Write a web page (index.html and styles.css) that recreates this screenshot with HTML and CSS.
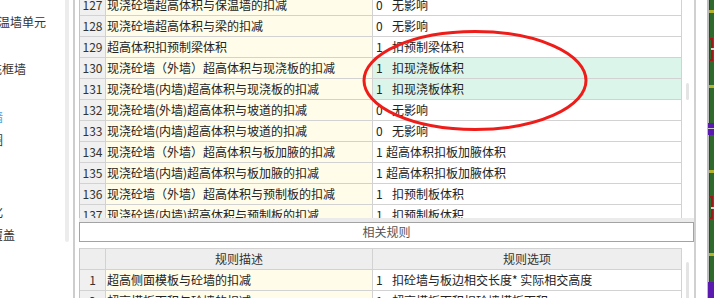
FILE: index.html
```html
<!DOCTYPE html>
<html lang="zh-CN">
<head>
    <meta charset="UTF-8">
    <title>计算规则</title>
    <link rel="stylesheet" href="styles.css">
</head>
<body>
    <div class="window">
        <div class="side">
            <div class="tree">
                <div class="node"><span class="i14">保温墙单元</span></div>
                <div class="node"></div>
                <div class="node"><span class="i22">填充框墙</span></div>
                <div class="node"></div>
                <div class="node blue"><span class="i33">砌体墙</span></div>
                <div class="node"><span class="i33">砖胎圈</span></div>
                <div class="node"></div>
                <div class="node"></div>
                <div class="node"><span class="i33">装饰化</span></div>
                <div class="node"><span class="i9">覆盖</span></div>
            </div>
            <div class="side-scroll"></div>
        </div>
        <div class="divider"></div>

        <div class="main">
            <div class="upper">
                <div class="grid">
                    <div class="row"><div class="num">127</div><div class="desc">现浇砼墙超高体积与保温墙的扣减</div><div class="val"><b>0</b>无影响</div></div>
                    <div class="row"><div class="num">128</div><div class="desc">现浇砼墙超高体积与梁的扣减</div><div class="val"><b>0</b>无影响</div></div>
                    <div class="row"><div class="num">129</div><div class="desc">超高体积扣预制梁体积</div><div class="val"><b>1</b>扣预制梁体积</div></div>
                    <div class="row hl"><div class="num">130</div><div class="desc">现浇砼墙（外墙）超高体积与现浇板的扣减</div><div class="val"><b>1</b>扣现浇板体积</div></div>
                    <div class="row hl"><div class="num">131</div><div class="desc">现浇砼墙(内墙)超高体积与现浇板的扣减</div><div class="val"><b>1</b>扣现浇板体积</div></div>
                    <div class="row"><div class="num">132</div><div class="desc">现浇砼墙(外墙)超高体积与坡道的扣减</div><div class="val"><b>0</b>无影响</div></div>
                    <div class="row"><div class="num">133</div><div class="desc">现浇砼墙(内墙)超高体积与坡道的扣减</div><div class="val"><b>0</b>无影响</div></div>
                    <div class="row"><div class="num">134</div><div class="desc">现浇砼墙（外墙）超高体积与板加腋的扣减</div><div class="val"><b class="tight">1</b>超高体积扣板加腋体积</div></div>
                    <div class="row"><div class="num">135</div><div class="desc">现浇砼墙(内墙)超高体积与板加腋的扣减</div><div class="val"><b class="tight">1</b>超高体积扣板加腋体积</div></div>
                    <div class="row"><div class="num">136</div><div class="desc">现浇砼墙（外墙）超高体积与预制板的扣减</div><div class="val"><b>1</b>扣预制板体积</div></div>
                    <div class="row"><div class="num">137</div><div class="desc">现浇砼墙(内墙)超高体积与预制板的扣减</div><div class="val"><b>1</b>扣预制板体积</div></div>
                </div>
                <div class="vscroll"><div class="thumb"></div></div>
            </div>

            <div class="band"></div>
            <div class="caption">相关规则</div>

            <div class="lower">
                <div class="grid">
                    <div class="row head"><div class="num"></div><div class="desc">规则描述</div><div class="val">规则选项</div></div>
                    <div class="row"><div class="num">1</div><div class="desc">超高侧面模板与砼墙的扣减</div><div class="val"><b>1</b>扣砼墙与板边相交长度* 实际相交高度</div></div>
                    <div class="row"><div class="num">2</div><div class="desc">超高模板面积与砼墙的扣减</div><div class="val"><b>1</b>超高模板面积扣砼墙模板面积</div></div>
                </div>
                <div class="vscroll low"><div class="thumb long"></div></div>
            </div>
        </div>

        <div class="edge"></div>
        <div class="blank"></div>
        <div class="drawing">
            <svg width="7" height="298" viewBox="0 0 7 298">
                <rect x="0" y="0" width="2" height="298" fill="#bdbdbd"/>
                <rect x="2" y="0" width="5" height="298" fill="#2f6a2c"/>
                <rect x="2" y="0" width="1" height="298" fill="#3a3a3a"/>
                <rect x="2" y="10" width="5" height="3" fill="#b5b52a"/>
                <rect x="2" y="85" width="5" height="3" fill="#b5b52a"/>
                <rect x="2" y="170" width="5" height="3" fill="#b5b52a"/>
                <rect x="2" y="253" width="5" height="3" fill="#b5b52a"/>
                <path d="M2 39 H5 V60 H2" fill="none" stroke="#a01818" stroke-width="2"/>
                <rect x="4" y="48" width="3" height="2" fill="#d8d8d8"/>
                <path d="M2 197 H5 V218 H2" fill="none" stroke="#a01818" stroke-width="2"/>
                <rect x="4" y="207" width="3" height="2" fill="#d8d8d8"/>
                <rect x="1" y="123" width="6" height="12" fill="#5a1ab0"/>
                <rect x="1" y="128" width="6" height="1" fill="#c8c8c8"/>
                <rect x="1" y="282" width="6" height="16" fill="#5a1ab0"/>
            </svg>
        </div>
    </div>

    <svg class="mark" width="714" height="298" viewBox="0 0 714 298">
        <ellipse cx="475" cy="80.5" rx="111" ry="49" fill="none" stroke="#ee1d1a" stroke-width="3"/>
    </svg>
</body>
</html>
```

FILE: styles.css
```css
body {
    margin: 0;
    font-family: "Noto Sans CJK SC", "DejaVu Sans", sans-serif;
    font-size: 12px;
    color: #222;
    background: #fff;
    overflow: hidden;
}
.window {
    display: flex;
    width: 714px;
    height: 298px;
}

/* left tree, clipped */
.side {
    width: 73px;
    flex-shrink: 0;
    display: flex;
}
.tree {
    width: 65px;
    overflow: hidden;
    padding-top: 10px;
    box-sizing: border-box;
}
.node {
    height: 23.7px;
    line-height: 23.7px;
    white-space: nowrap;
    color: #333;
}
.node.blue {
    color: #4a9de6;
}
.node span {
    display: inline-block;
}
.i9 { margin-left: -9px; }
.i14 { margin-left: -14px; }
.i22 { margin-left: -22px; }
.i33 { margin-left: -33px; }
.side-scroll {
    width: 4px;
    height: 242px;
    background: #ececec;
    border-radius: 0 0 2px 2px;
}
.divider {
    width: 2px;
    flex-shrink: 0;
    background: #cdcdcd;
    margin-right: 4px;
}

/* rule grids */
.main {
    width: 615px;
    flex-shrink: 0;
    display: flex;
    flex-direction: column;
}
.upper {
    height: 218px;
    display: flex;
    overflow: hidden;
}
.grid {
    width: 603px;
    border-left: 1px solid #c4c4c4;
    box-sizing: border-box;
}
.upper .row:first-child {
    margin-top: -5px;
}
.row {
    display: grid;
    grid-template-columns: 26px 267px 309px;
    height: 21px;
}
.row > div {
    border-right: 1px solid #d2d2d2;
    border-bottom: 1px solid #d2d2d2;
    box-sizing: border-box;
    line-height: 20px;
    white-space: nowrap;
    overflow: hidden;
}
.num {
    background: #f0f0f0;
    text-align: center;
    color: #333;
}
.desc {
    background: #fffdea;
    padding-left: 1px;
}
.val {
    background: #fff;
    padding-left: 3px;
}
.val b {
    font-weight: normal;
    display: inline-block;
    width: 16px;
}
.val b.tight {
    width: 10px;
}
.row.hl .val {
    background: #dcf5ea;
}
.row.head > div {
    background: #eeeeee;
    text-align: center;
    color: #333;
    padding-left: 0;
}
.vscroll {
    width: 12px;
    padding: 83px 0 0 4px;
    box-sizing: border-box;
}
.vscroll.low {
    padding-top: 14px;
}
.thumb {
    width: 3px;
    height: 17px;
    background: #e4e4e4;
    border-radius: 2px;
}
.thumb.long {
    height: 60px;
}
.band {
    height: 4px;
    background: #ebebeb;
}
.caption {
    height: 20px;
    border: 1px solid #a3a3a3;
    box-sizing: border-box;
    line-height: 18px;
    text-align: center;
    color: #555;
    background: #fff;
}
.lower {
    margin-top: 6px;
    display: flex;
    flex: 1;
    overflow: hidden;
}
.lower .grid {
    border-top: 1px solid #d2d2d2;
}

/* right edge with drawing */
.edge {
    width: 2px;
    flex-shrink: 0;
    background: #d0d0d0;
}
.blank {
    width: 11px;
    flex-shrink: 0;
}
.drawing {
    width: 7px;
    flex-shrink: 0;
}
.drawing svg {
    display: block;
}
.mark {
    position: absolute;
    top: 0;
    left: 0;
    pointer-events: none;
}
```
